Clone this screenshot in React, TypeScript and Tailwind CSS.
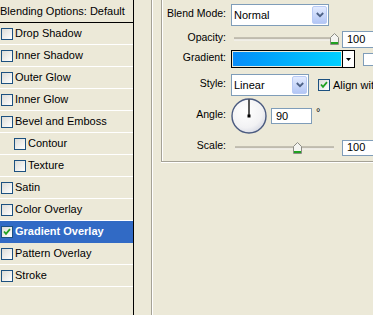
import React from "react";

const effects = [
  { label: "Drop Shadow" },
  { label: "Inner Shadow" },
  { label: "Outer Glow" },
  { label: "Inner Glow" },
  { label: "Bevel and Emboss" },
  { label: "Contour", indent: true },
  { label: "Texture", indent: true },
  { label: "Satin" },
  { label: "Color Overlay" },
  { label: "Gradient Overlay", checked: true, selected: true },
  { label: "Pattern Overlay" },
  { label: "Stroke" },
];

const Check = ({ checked, size = 12 }: { checked?: boolean; size?: number }) => (
  <div
    className="shrink-0 border border-[#1C5180] bg-linear-to-br from-[#DCDCD7] to-white flex items-center justify-center"
    style={{ width: size, height: size }}
  >
    {checked && (
      <svg width="8" height="8" viewBox="0 0 8 8">
        <path d="M1 3.5 L3 5.8 L7 1.2" fill="none" stroke="#21A121" strokeWidth="1.8" />
      </svg>
    )}
  </div>
);

const DropButton = () => (
  <div className="h-full w-[15px] rounded-[2px] border border-[#B9CBF5] bg-linear-to-b from-[#E3EBFE] to-[#B3C6F5] flex items-center justify-center">
    <svg width="8" height="6" viewBox="0 0 8 6">
      <path d="M0.8 1 L4 4.2 L7.2 1" fill="none" stroke="#4D6185" strokeWidth="1.8" />
    </svg>
  </div>
);

const Select = ({ value, width }: { value: string; width: string }) => (
  <div className={`${width} h-[22px] bg-white border border-[#7F9DB9] flex items-center pl-[2px] pr-[1px] py-[1px]`}>
    <span className="flex-1 text-[11px] text-black">{value}</span>
    <DropButton />
  </div>
);

const Thumb = () => (
  <svg width="9" height="12" viewBox="0 0 9 12">
    <path d="M0.5 4.5 L4.5 0.5 L8.5 4.5 V11.5 H0.5 Z" fill="#F4F4F0" stroke="#8C8C84" />
    <rect x="1" y="9" width="7" height="2" fill="#21A121" />
  </svg>
);

const Slider = ({ thumbLeft, trackLeft, trackWidth }: { thumbLeft: number; trackLeft: number; trackWidth: number }) => (
  <div className="relative h-full w-[111px]">
    <div
      className="absolute top-1/2 -translate-y-1/2 h-[3px] border-t border-[#A5A296] border-b border-b-white bg-[#D8D5C6]"
      style={{ left: trackLeft, width: trackWidth }}
    />
    <div className="absolute top-1/2 -translate-y-1/2" style={{ left: thumbLeft }}>
      <Thumb />
    </div>
  </div>
);

const Field = ({ value, className }: { value: string; className: string }) => (
  <div className={`${className} shrink-0 bg-white border border-[#7F9DB9] flex items-center pl-[4px] text-[11px] text-black`}>
    {value}
  </div>
);

const Label = ({ children }: { children: React.ReactNode }) => (
  <div className="w-[64px] shrink-0 text-right text-[10.5px] text-black mr-[5px] -mt-[3px]">{children}</div>
);

const Dial = () => (
  <svg width="36" height="36" viewBox="0 0 36 36" className="shrink-0">
    <defs>
      <radialGradient id="dialFill" cx="0.4" cy="0.35" r="0.7">
        <stop offset="0" stopColor="#FFFFFF" />
        <stop offset="0.7" stopColor="#F2F2F4" />
        <stop offset="1" stopColor="#D6D9E4" />
      </radialGradient>
    </defs>
    <circle cx="18" cy="18" r="17" fill="url(#dialFill)" stroke="#4B5B80" strokeWidth="1.4" />
    <line x1="18" y1="1.5" x2="18" y2="18" stroke="#000" strokeWidth="1.3" />
    <rect x="16.5" y="16.5" width="3" height="3" fill="#000" />
  </svg>
);

export default function App() {
  return (
    <div className="w-[373px] h-[315px] overflow-hidden bg-[#ECE9D8] flex font-['Liberation_Sans',Arial,sans-serif] text-black select-none">
      {/* Styles list */}
      <div className="w-[134px] shrink-0 h-full border-r border-black flex flex-col">
        <div className="h-[23px] shrink-0 border-b border-black flex items-center text-[11px] whitespace-nowrap">
          Blending Options: Default
        </div>
        {effects.map((e) => (
          <div
            key={e.label}
            className={`h-[22px] shrink-0 border-b flex items-center gap-[2px] text-[11px] whitespace-nowrap ${
              e.indent ? "pl-[14px]" : "pl-[1px]"
            } ${e.selected ? "bg-[#316AC5] border-[#316AC5] text-white font-bold" : "border-white"}`}
          >
            <Check checked={e.checked} />
            <span>{e.label}</span>
          </div>
        ))}
      </div>

      {/* Options */}
      <div className="flex-1 h-full pl-[17px]">
        <div className="h-full border-l border-[#A5A296] shadow-[inset_1px_0_0_#fff] pl-[9px]">
          <div className="h-[162px] w-[260px] border-l border-b border-[#A5A296] shadow-[inset_1px_0_0_#fff,0_1px_0_#fff] flex flex-col pt-[4px] pb-[6px]">
            <div className="h-[22px] flex items-center">
              <Label>Blend Mode:</Label>
              <Select value="Normal" width="w-[98px]" />
            </div>

            <div className="h-[18px] mt-[4px] flex items-center">
              <Label>Opacity:</Label>
              <Slider thumbLeft={99} trackLeft={3} trackWidth={101} />
              <Field value="100" className="w-[40px] h-[17px]" />
            </div>

            <div className="h-[18px] mt-[2px] flex items-center">
              <Label>Gradient:</Label>
              <div className="w-[124px] h-[18px] border border-black flex">
                <div className="flex-1 border border-[#ECE9D8] bg-linear-to-r from-[#0A8CF8] to-[#00D0FF]" />
                <div className="w-[12px] border-l border-black bg-white flex items-center justify-center">
                  <svg width="5" height="3" viewBox="0 0 5 3">
                    <path d="M0 0 H5 L2.5 3 Z" fill="#000" />
                  </svg>
                </div>
              </div>
              <div className="ml-[8px] w-[13px] h-[13px] shrink-0 border border-[#7F9DB9] bg-white" />
            </div>

            <div className="h-[22px] mt-[6px] flex items-center">
              <Label>Style:</Label>
              <Select value="Linear" width="w-[78px]" />
              <div className="ml-[9px]">
                <Check checked size={12} />
              </div>
              <span className="ml-[3px] text-[11px] whitespace-nowrap">Align with Layer</span>
            </div>

            <div className="h-[36px] mt-[2px] flex items-center">
              <Label>Angle:</Label>
              <Dial />
              <Field value="90" className="ml-[4px] w-[41px] h-[16px]" />
              <span className="ml-[4px] -mt-[8px] text-[11px]">°</span>
            </div>

            <div className="h-[15px] mt-[6px] flex items-center">
              <Label>Scale:</Label>
              <Slider thumbLeft={62} trackLeft={4} trackWidth={99} />
              <Field value="100" className="w-[40px] h-[16px]" />
            </div>
          </div>
        </div>
      </div>
    </div>
  );
}
